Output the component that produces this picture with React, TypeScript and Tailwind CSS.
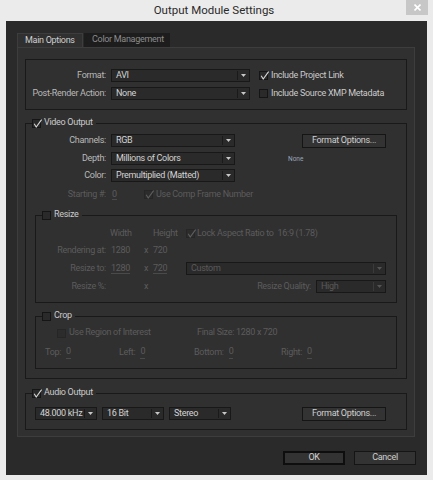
import React from "react";

function Arrow({ dis }: { dis?: boolean }) {
  return (
    <svg width="5" height="3" viewBox="0 0 5 3">
      <path d="M0 0h5L2.5 3z" fill={dis ? "#555" : "#c8c8c8"} />
    </svg>
  );
}

function Select({ w, value, dis }: { w: string; value: string; dis?: boolean }) {
  return (
    <div className={`${w} h-[13px] shrink-0 flex items-center border border-[#181818] bg-[#2a2a2a]`}>
      <span
        className={`flex-1 pl-[4px] leading-none whitespace-nowrap overflow-hidden ${
          dis ? "text-[#5a5a5a]" : "text-[#d4d4d4]"
        }`}
      >
        {value}
      </span>
      <span className={`w-px h-[9px] shrink-0 ${dis ? "bg-[#3a3a3a]" : "bg-[#1a1a1a]"}`} />
      <span className="w-[11px] shrink-0 flex justify-center">
        <Arrow dis={dis} />
      </span>
    </div>
  );
}

function Check({ on, dis }: { on?: boolean; dis?: boolean }) {
  return (
    <span
      className={`relative w-[9px] h-[9px] shrink-0 border ${
        dis ? "border-[#262626] bg-[#2c2c2c]" : "border-[#151515] bg-[#2a2a2a]"
      }`}
    >
      {on && (
        <svg className="absolute -top-[2px] -left-[1px]" width="11" height="11" viewBox="0 0 11 11">
          <path d="M2.2 5.8 L4.2 9 L9.6 1.6" fill="none" stroke={dis ? "#5e5e5e" : "#d6d6d6"} strokeWidth="1.1" />
        </svg>
      )}
    </span>
  );
}

function Btn({ label, w, def }: { label: string; w: string; def?: boolean }) {
  return (
    <div
      className={`${w} h-[14px] flex items-center justify-center text-[#cfcfcf] bg-[#333333] ${
        def ? "border-2 border-[#0e0e0e]" : "border border-[#151515]"
      }`}
    >
      {label}
    </div>
  );
}

function Legend({ title, on }: { title: string; on?: boolean }) {
  return (
    <legend className="ml-[6px] pr-[3px] h-[12px]">
      <span className="flex items-center gap-[3px] h-[12px] text-[#cbcbcb]">
        <Check on={on} />
        {title}
      </span>
    </legend>
  );
}

const U = ({ v }: { v: string }) => <span className="border-b border-[#4a4a4a] leading-[10px]">{v}</span>;

export default function App() {
  return (
    <div className="w-[433px] h-[480px] bg-[#ebebeb] flex flex-col font-['Roboto',sans-serif] text-[9px] tracking-[-0.3px] overflow-hidden">
      {/* title bar */}
      <div className="h-[21px] shrink-0 flex items-start">
        <div className="flex-1 flex justify-center pt-[2px] text-[11.5px] tracking-normal text-[#2a2a2a] pl-[22px]">
          Output Module Settings
        </div>
        <div className="w-[22px] h-[15px] mr-[5px] bg-[#c7c7c7] flex items-center justify-center">
          <svg width="7" height="7" viewBox="0 0 7 7">
            <path d="M0.5 0.5L6.5 6.5M6.5 0.5L0.5 6.5" stroke="#fff" strokeWidth="1.6" />
          </svg>
        </div>
      </div>

      {/* client */}
      <div className="ml-[6px] w-[421px] h-[454px] bg-[#2a2a2a] pl-[11px] pt-[12px] flex flex-col">
        {/* tabs */}
        <div className="flex h-[14px] gap-[1px]">
          <div className="w-[66px] bg-[#303030] border-t border-l border-r border-[#3d3d3d] text-[#cfcfcf] flex items-center pl-[7px]">
            Main Options
          </div>
          <div className="w-[86px] bg-[#1d1d1d] text-[#8c8c8c] flex items-center pl-[8px]">Color Management</div>
        </div>

        {/* panel */}
        <div className="w-[398px] h-[390px] bg-[#303030] border border-[#3d3d3d] pl-[7px] pt-[11px] text-[#b9b9b9]">
          {/* format box */}
          <div className="w-[382px] h-[51px] border border-[#191919] pt-[9px] flex flex-col gap-[5px]">
            <div className="flex items-center h-[13px]">
              <span className="w-[80px] text-right">Format:</span>
              <span className="ml-[5px]">
                <Select w="w-[139px]" value="AVI" />
              </span>
              <span className="ml-[9px] flex items-center gap-[3px] text-[#cbcbcb]">
                <Check on />
                Include Project Link
              </span>
            </div>
            <div className="flex items-center h-[13px]">
              <span className="w-[80px] text-right">Post-Render Action:</span>
              <span className="ml-[5px]">
                <Select w="w-[139px]" value="None" />
              </span>
              <span className="ml-[9px] flex items-center gap-[3px] text-[#cbcbcb]">
                <Check />
                Include Source XMP Metadata
              </span>
            </div>
          </div>

          {/* video output */}
          <fieldset className="mt-[7px] w-[382px] border border-[#191919] pt-[5px] pb-[9px]">
            <Legend title="Video Output" on />
            <div className="flex items-center h-[13px]">
              <span className="w-[80px] text-right">Channels:</span>
              <span className="ml-[5px]">
                <Select w="w-[124px]" value="RGB" />
              </span>
              <span className="ml-[67px]">
                <Btn label="Format Options..." w="w-[84px]" />
              </span>
            </div>
            <div className="flex items-center h-[13px] mt-[5px]">
              <span className="w-[80px] text-right">Depth:</span>
              <span className="ml-[5px]">
                <Select w="w-[124px]" value="Millions of Colors" />
              </span>
              <span className="ml-[53px] mt-[3px] text-[6.5px] tracking-normal text-[#9aa6bb]">None</span>
            </div>
            <div className="flex items-center h-[13px] mt-[4px]">
              <span className="w-[80px] text-right">Color:</span>
              <span className="ml-[5px]">
                <Select w="w-[124px]" value="Premultiplied (Matted)" />
              </span>
            </div>
            <div className="flex items-center h-[11px] mt-[7px] text-[#5c5c5c]">
              <span className="w-[80px] text-right">Starting #:</span>
              <span className="ml-[6px] w-[32px]">
                <U v="0" />
              </span>
              <span className="flex items-center gap-[3px]">
                <Check on dis />
                Use Comp Frame Number
              </span>
            </div>

            {/* resize */}
            <fieldset className="mt-[9px] ml-[9px] w-[362px] border border-[#191919] pt-[6px] pb-[9px] text-[#5c5c5c]">
              <Legend title="Resize" />
              <div className="flex items-center h-[13px]">
                <span className="w-[70px]" />
                <span className="ml-[4px] w-[43px]">Width</span>
                <span className="w-[33px]">Height</span>
                <span className="flex items-center gap-[2px]">
                  <Check on dis />
                  Lock Aspect Ratio to&nbsp; 16:9 (1.78)
                </span>
              </div>
              <div className="flex items-center h-[13px] mt-[4px]">
                <span className="w-[70px] text-right">Rendering at:</span>
                <span className="ml-[5px] w-[33px]">1280</span>
                <span className="w-[9px]">x</span>
                <span className="w-[33px]">720</span>
              </div>
              <div className="flex items-center h-[13px] mt-[5px]">
                <span className="w-[70px] text-right">Resize to:</span>
                <span className="ml-[5px] w-[33px]">
                  <U v="1280" />
                </span>
                <span className="w-[9px]">x</span>
                <span className="w-[33px]">
                  <U v="720" />
                </span>
                <Select w="w-[200px]" value="Custom" dis />
              </div>
              <div className="flex items-center h-[13px] mt-[5px]">
                <span className="w-[70px] text-right">Resize %:</span>
                <span className="ml-[5px] w-[33px]" />
                <span className="w-[9px]">x</span>
                <span className="flex-1 text-right pr-[5px]">Resize Quality:</span>
                <span className="mr-[10px]">
                  <Select w="w-[70px]" value="High" dis />
                </span>
              </div>
            </fieldset>

            {/* crop */}
            <fieldset className="mt-[7px] ml-[9px] w-[362px] border border-[#191919] pt-[5px] pb-[9px] text-[#5c5c5c]">
              <Legend title="Crop" />
              <div className="flex items-center h-[12px]">
                <span className="ml-[21px] flex items-center gap-[3px] w-[140px]">
                  <Check dis />
                  Use Region of Interest
                </span>
                <span>Final Size: 1280 x 720</span>
              </div>
              <div className="flex items-center h-[13px] mt-[7px] pl-[9px]">
                <span className="w-[74px] flex gap-[5px]">
                  Top: <U v="0" />
                </span>
                <span className="w-[75px] flex gap-[5px]">
                  Left: <U v="0" />
                </span>
                <span className="w-[87px] flex gap-[5px]">
                  Bottom: <U v="0" />
                </span>
                <span className="flex gap-[5px]">
                  Right: <U v="0" />
                </span>
              </div>
            </fieldset>
          </fieldset>

          {/* audio */}
          <fieldset className="mt-[8px] w-[382px] border border-[#191919] pt-[8px] pb-[9px]">
            <Legend title="Audio Output" on />
            <div className="flex items-center h-[13px] pl-[9px] gap-[5px]">
              <Select w="w-[62px]" value="48.000 kHz" />
              <Select w="w-[62px]" value="16 Bit" />
              <Select w="w-[62px]" value="Stereo" />
              <span className="ml-[66px]">
                <Btn label="Format Options..." w="w-[84px]" />
              </span>
            </div>
          </fieldset>
        </div>

        {/* bottom buttons */}
        <div className="flex mt-[14px] pl-[266px] gap-[9px]">
          <Btn label="OK" w="w-[62px]" def />
          <Btn label="Cancel" w="w-[62px]" />
        </div>
      </div>
    </div>
  );
}
